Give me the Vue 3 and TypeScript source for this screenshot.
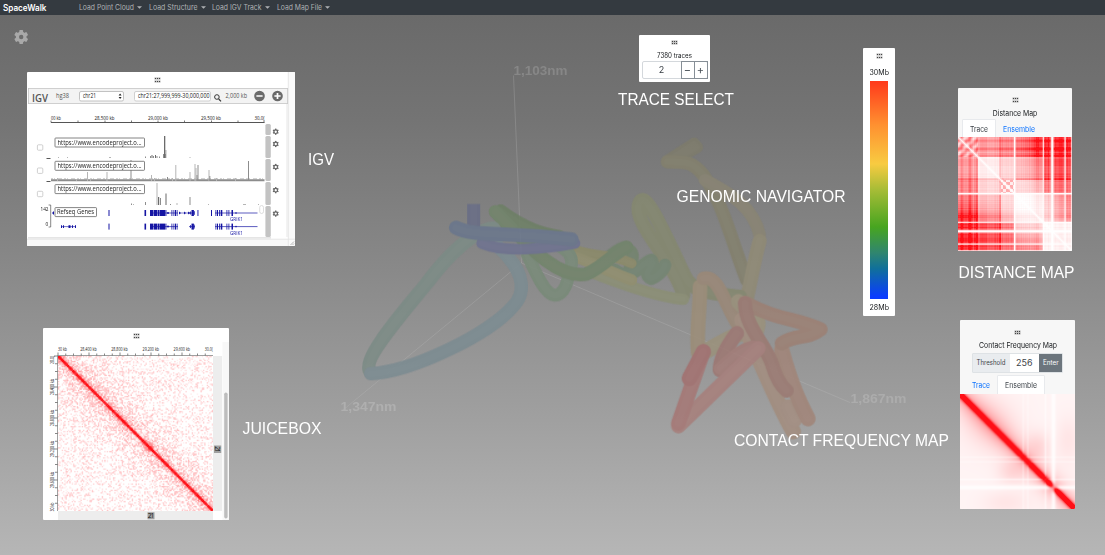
<script setup lang="ts">
import { onMounted, ref } from 'vue'

const menus = [
  { label: 'Load Point Cloud', w: 55, gap: 15 },
  { label: 'Load Structure', w: 48.5, gap: 14.5 },
  { label: 'Load IGV Track', w: 49.5, gap: 15 },
  { label: 'Load Map File', w: 45, gap: 9 },
]

interface Caption { x: number; y: number; w: number; text: string }
const captions: Caption[] = [
  { x: 308, y: 165, w: 26, text: 'IGV' },
  { x: 618, y: 104.7, w: 116, text: 'TRACE SELECT' },
  { x: 676.5, y: 202.3, w: 169, text: 'GENOMIC NAVIGATOR' },
  { x: 242.5, y: 433.7, w: 79, text: 'JUICEBOX' },
  { x: 958.5, y: 277.7, w: 116, text: 'DISTANCE MAP' },
  { x: 734, y: 445.7, w: 215, text: 'CONTACT FREQUENCY MAP' },
]

interface Tube { d: string; c: string; w: number }
const leftTubes: Tube[] = [
  { d: 'M735 600 C790 620 840 610 905 640', c: '#8b8a68', w: 30 },
  { d: 'M740 622 C790 640 850 670 905 690', c: '#918f6e', w: 34 },
  { d: 'M690 590 C730 610 730 640 718 660 C712 720 690 738 672 735 C640 730 610 650 590 610', c: '#788a78', w: 38 },
  { d: 'M512 482 C590 540 640 550 690 560', c: '#6d7f65', w: 38 },
  { d: 'M496 485 C590 580 680 690 770 672 C820 650 850 610 890 592', c: '#71846a', w: 40 },
  { d: 'M490 535 C430 540 350 620 290 700 C230 775 90 930 122 966', c: '#7c8b86', w: 42 },
  { d: 'M122 971 C250 965 480 850 548 770 C590 730 578 670 535 622 C520 600 490 580 470 560', c: '#7b8b91', w: 40 },
  { d: 'M455 580 C520 608 640 598 735 580', c: '#6e7290', w: 32 },
  { d: 'M431 462 L431 545', c: '#686d86', w: 39 },
  { d: 'M378 533 C430 560 520 545 725 568', c: '#69768c', w: 42 },
]
const rightTubes: Tube[] = [
  { d: 'M235 120 L312 70 L322 82 L275 108', c: '#7e7c6c', w: 34 },
  { d: 'M232 125 C300 125 310 130 340 165 C400 250 430 380 470 480', c: '#83806d', w: 40 },
  { d: 'M345 180 C420 220 490 260 509 345', c: '#898473', w: 38 },
  { d: 'M509 362 C490 430 480 500 465 560', c: '#908a75', w: 42 },
  { d: 'M280 525 C255 430 130 310 146 255 C160 200 205 300 285 470 C310 520 370 520 450 530', c: '#85886f', w: 42 },
  { d: 'M0 455 C100 495 200 530 280 538', c: '#8b8f75', w: 34 },
  { d: 'M0 455 C30 440 70 390 102 382 C150 400 115 430 120 450', c: '#73846e', w: 38 },
  { d: 'M75 450 C130 490 150 430 184 420 C200 440 150 460 184 476 C220 460 225 435 225 435', c: '#738571', w: 38 },
  { d: 'M330 500 C330 570 318 640 325 700', c: '#9b8d77', w: 44 },
  { d: 'M340 475 C390 460 410 580 455 630', c: '#9a8877', w: 40 },
  { d: 'M345 695 C400 665 430 640 500 630 C520 580 450 560 445 545', c: '#9a917b', w: 46 },
  { d: 'M455 600 C500 700 560 850 610 935', c: '#a28d7e', w: 46 },
  { d: 'M594 860 L614 900', c: '#a38e81', w: 44 },
  { d: 'M654 896 C620 830 600 780 575 690', c: '#a18578', w: 46 },
  { d: 'M575 670 C620 640 650 660 692 628 C620 595 560 600 465 548', c: '#9c8074', w: 42 },
  { d: 'M465 550 C465 620 530 680 545 730 C560 780 575 800 590 812', c: '#9b7971', w: 42 },
  { d: 'M440 640 C410 680 390 720 390 750', c: '#9d7772', w: 44 },
  { d: 'M390 745 C430 710 450 690 490 680', c: '#a27c77', w: 38 },
  { d: 'M505 685 L300 885 L265 918', c: '#a77f7b', w: 44 },
  { d: 'M265 910 L340 695', c: '#a57775', w: 44 },
  { d: 'M298 775 L340 695', c: '#a2706f', w: 46 },
]

const rulerTicks = [51, 78, 105, 131.5, 158, 184.5, 211.5, 238, 264]
const bars: number[][] = [
  // x, baseline, height, width, tone
  [58, 158, 1, 1, 2], [67, 158, 1, 1, 2], [109, 158, 1, 2, 2], [145, 158, 1.5, 1, 1], [150, 158, 2, 1, 1],
  [151.5, 158, 3, 1, 0], [153, 158, 2, 1, 1], [155, 158, 3, 1, 0], [156.5, 158, 2, 1, 1], [159, 158, 1.5, 1, 1],
  [163, 158, 4, 3, 1], [164, 158, 22, 1.3, 0], [189.5, 158, 1, 1, 2], [165.5, 158, 8, 0.8, 1],
  [57, 181, 3, 1, 2], [76, 181, 2, 1, 2], [87, 181, 9, 1, 2], [90, 181, 2, 1, 2], [106.5, 181, 9, 1, 2],
  [130.5, 181, 21, 1, 1], [151, 181, 6, 1, 2], [154, 181, 3, 1, 2], [167, 181, 4, 1, 1], [175.3, 181, 16, 1, 2],
  [172, 181, 3, 1, 2], [189.5, 181, 9, 1, 2], [194.5, 181, 17, 1, 2], [195.5, 181, 13, 1, 2], [197.5, 181, 16, 1, 1],
  [196.5, 181, 6, 1, 1], [208.5, 181, 11, 1, 2], [209.3, 181, 5, 1, 1], [216, 181, 3, 1, 2], [248, 181, 20, 1, 1],
  [235, 181, 3, 1, 2], [131, 205, 1.5, 1, 1], [133, 205, 1, 1, 2], [145, 205, 3, 1, 1], [156.5, 205, 22, 1, 2],
  [158, 205, 8, 1.2, 0], [160, 205, 7, 1, 1], [165.5, 205, 11.5, 1, 0], [170, 205, 1, 1, 1], [176.5, 205, 2, 1, 2],
  [189.5, 205, 8, 1, 1], [208, 205, 1, 1, 2], [243, 205, 1, 3, 2], [258, 205, 1, 1, 2],
]
const tones = ['#6b6b6b', '#8d8d8d', '#b5b5b5']
const exons: number[][] = [
  [108.5, 1, 6], [144.5, 1.6, 6], [150, 3, 6], [153.5, 4, 6], [158, 1.6, 6], [160, 5, 6], [165.4, 1, 6],
  [171.5, 0.8, 6], [173.5, 0.8, 6], [175, 1, 6], [176.7, 0.8, 6], [191.5, 2.4, 6], [190, 0.8, 3], [194, 0.6, 4],
  [215.5, 0.8, 6], [217, 1, 6], [219, 0.8, 6], [220.7, 1.6, 6], [226.5, 0.8, 6], [228.5, 0.8, 6], [231.5, 1.5, 6],
]
const gearRows = [131.7, 144, 167, 190.2, 213.6]
const slots = [[124, 11], [136, 22], [159, 22], [182, 23], [206, 31]]
const trackNames = [138, 161.3, 184.6]

const juiceLabels = [
  { at: 62.5, w: 9, t: '30 kb' }, { at: 88.5, w: 16.5, t: '28,400 kb' }, { at: 119.5, w: 16.5, t: '28,800 kb' },
  { at: 150.8, w: 16.5, t: '29,200 kb' }, { at: 181.8, w: 16.5, t: '29,600 kb' }, { at: 208.7, w: 8, t: '30,0(' },
]
const juiceLeft = [
  { at: 360, w: 8, t: '28,0(' }, { at: 387, w: 16.5, t: '28,400 kb' }, { at: 418, w: 16.5, t: '28,800 kb' },
  { at: 449, w: 16.5, t: '29,200 kb' }, { at: 480, w: 16.5, t: '29,600 kb' }, { at: 507, w: 9, t: '30 kb' },
]
const juiceTicks = Array.from({ length: 20 }, (_, i) => i * 7.75)

const spokes = [0, 60, 120, 180, 240, 300]

function makeRandom(seed: number) {
  let s = seed
  return () => {
    s = (s * 1664525 + 1013904223) >>> 0
    return s / 4294967296
  }
}

type Shade = (x: number, y: number) => number
function paint(cv: HTMLCanvasElement | null, n: number, shade: Shade) {
  const ctx = cv?.getContext('2d')
  if (!ctx) return
  const img = ctx.createImageData(n, n)
  for (let y = 0; y < n; y++) {
    for (let x = 0; x < n; x++) {
      const v = Math.max(0, Math.min(1, shade(x, y)))
      const k = (y * n + x) * 4
      img.data[k] = 255
      img.data[k + 1] = 255 - v * 240
      img.data[k + 2] = 255 - v * 233
      img.data[k + 3] = 255
    }
  }
  ctx.putImageData(img, 0, 0)
}

const juice = ref<HTMLCanvasElement | null>(null)
const dist = ref<HTMLCanvasElement | null>(null)
const contact = ref<HTMLCanvasElement | null>(null)
const bump = (t: number, c: number, w: number) => Math.exp(-(((t - c) / w) ** 2))

const edges = [0.17, 0.37, 0.49, 0.745, 0.82, 1.01]
const blocks = [
  [0.34, 0.4, 0.48, 0.62, 0.92, 0.88],
  [0.4, 0.08, 0.18, 0.32, 0.76, 0.74],
  [0.48, 0.18, 0.1, 0.18, 0.58, 0.6],
  [0.62, 0.32, 0.18, 0.02, 0.14, 0.18],
  [0.92, 0.76, 0.58, 0.14, 0.03, 0.06],
  [0.88, 0.74, 0.6, 0.18, 0.06, 0.06],
]
const domain = (t: number) => edges.findIndex((e) => t < e)

onMounted(() => {
  const r1 = makeRandom(21)
  const n = 124
  const grid = new Float32Array(n * n)
  for (let y = 0; y < n; y++) {
    for (let x = 0; x <= y; x++) {
      const d = y - x
      const m = (x + y) / 2
      const dens = 0.28 + 0.5 * Math.exp(-d / 15) + 0.15 * bump(m, 25, 16) * Math.exp(-d / 40)
      let v = r1() < dens ? 0.05 + r1() * 0.2 + 0.25 * r1() * Math.exp(-d / 18) : 0
      v += Math.exp(-d / 1.8) * (0.25 + 0.5 * r1())
      if (d < 2) v = 0.85 + r1() * 0.35
      v += 0.9 * bump(m, 73, 1.8) * Math.exp(-d / 2)
      grid[y * n + x] = v
      grid[x * n + y] = v
    }
  }
  paint(juice.value, n, (x, y) => grid[y * n + x])

  const size = 114
  const r2 = makeRandom(8)
  const jitter = Array.from({ length: size }, () => r2() - 0.5)
  const stripe = (t: number, i: number) =>
    0.22 * jitter[i] + 0.5 * bump(t, 0.1, 0.012) + 0.2 * bump(t, 0.03, 0.015) + 0.25 * bump(t, 0.16, 0.008) +
    0.15 * bump(t, 0.365, 0.007) + 0.3 * bump(t, 0.69, 0.03) - 0.15 * bump(t, 0.055, 0.012) - 0.15 * bump(t, 0.13, 0.01)
  const gap = (t: number) =>
    1 - Math.min(1, bump(t, 0.493, 0.009) + bump(t, 0.822, 0.015) + 0.8 * bump(t, 0.745, 0.007) +
      0.85 * bump(t, 0.935, 0.008) + 0.95 * bump(t, 0.996, 0.009))
  paint(dist.value, size, (x, y) => {
    const a = x / size
    const b = y / size
    const d = Math.abs(a - b)
    const hi = Math.max(a, b)
    const p = domain(a)
    const q = domain(b)
    let v = blocks[p][q]
    if (p === 3 || q === 3) v += (hi - 0.6) * 1.1 * Math.min(1, d * 2)
    v += (stripe(a, x) + stripe(b, y)) * (0.12 + v * 0.7)
    if (p === 2 && q === 2) v = Math.sin(a * 105) * Math.sin(b * 105) < 0 ? 0.35 : 0.08
    if (p === 0 && q === 0) v += 0.15 * Math.sin((a + b) * 75)
    v += 0.25 * (bump(a, 0.365, 0.007) + bump(b, 0.365, 0.007)) * (hi < 0.4 || hi > 0.5 ? 1 : 0.6)
    v *= Math.min(1, 0.15 + d * 34)
    return v * gap(a) * gap(b)
  })

  const notch = (t: number) =>
    1 - 0.85 * bump(t, 0.815, 0.02) - 0.4 * bump(t, 0.55, 0.007) - 0.4 * bump(t, 0.59, 0.007) - 0.55 * bump(t, 0.745, 0.008)
  paint(contact.value, size, (x, y) => {
    const a = x / (size - 1)
    const b = y / (size - 1)
    const d = Math.abs(a - b)
    const m = (a + b) / 2
    const core = Math.exp(-((d / 0.034) ** 2)) * 1.05 * Math.sqrt(Math.min(1, notch(m) + 0.1))
    const halo = 0.55 * Math.exp(-d / (0.08 + 0.05 * bump(m, 0.25, 0.2))) + 0.045
    const patch = 0.1 * bump(Math.max(a, b), 0.68, 0.1) * bump(Math.min(a, b), 0.45, 0.12) +
      0.06 * bump(Math.max(a, b), 0.95, 0.1) * bump(Math.min(a, b), 0.4, 0.2)
    return core + (halo + patch) * Math.max(0, notch(a)) * Math.max(0, notch(b))
  })
})
</script>

<template>
  <main class="app">
    <nav class="nav">
      <svg class="brand" width="50" height="15">
        <text x="3" y="10.6" textLength="43.5" lengthAdjust="spacingAndGlyphs">SpaceWalk</text>
      </svg>
      <div class="menus">
        <div v-for="m in menus" :key="m.label" class="menu" :style="{ width: m.w + m.gap + 'px' }">
          <svg :width="m.w + 3" height="15"><text x="1" y="10.4" :textLength="m.w" lengthAdjust="spacingAndGlyphs">{{ m.label }}</text></svg>
          <svg class="caret" width="5" height="3"><path d="M0 .2h5L2.5 2.8z" /></svg>
        </div>
      </div>
    </nav>

    <svg class="scene" width="1105" height="555" viewBox="0 0 1105 555">
      <g fill="none" stroke="#c4c4c4" stroke-opacity=".3" stroke-width=".8">
        <path d="M513.5 75.5L521.5 263L343 410" />
        <path d="M521.5 263L850 402.5" />
      </g>
      <g fill="none" stroke-linejoin="round" stroke-linecap="round" opacity=".88">
        <g transform="translate(590 120) scale(.33333)">
          <g v-for="(t, i) in rightTubes" :key="i">
            <path :d="t.d" :stroke="t.c" :stroke-width="t.w" />
            <path :d="t.d" stroke="#fff" stroke-opacity=".015" :stroke-width="t.w * 0.55" />
          </g>
        </g>
        <g transform="translate(330 50) scale(.33333)">
          <g v-for="(t, i) in leftTubes" :key="i" :stroke-linecap="i === 8 ? 'butt' : 'round'">
            <path :d="t.d" :stroke="t.c" :stroke-width="t.w" />
            <path :d="t.d" stroke="#fff" stroke-opacity=".015" :stroke-width="t.w * 0.55" />
          </g>
        </g>
      </g>
      <g class="axis">
        <text x="513.5" y="75.3" textLength="54" lengthAdjust="spacingAndGlyphs" fill="#878787">1,103nm</text>
        <text x="340.5" y="411" textLength="56" lengthAdjust="spacingAndGlyphs" fill="#afafaf">1,347nm</text>
        <text x="850.5" y="403" textLength="56" lengthAdjust="spacingAndGlyphs" fill="#acacac">1,867nm</text>
      </g>
      <g class="captions">
        <text v-for="c in captions" :key="c.text" :x="c.x" :y="c.y" :textLength="c.w" lengthAdjust="spacingAndGlyphs">{{ c.text }}</text>
      </g>
      <g transform="translate(21.2 37)" fill="#a9a9a9">
        <rect v-for="a in spokes" :key="a" x="-1.9" y="-7" width="3.8" height="4" rx=".8" :transform="`rotate(${a})`" />
        <circle r="3.8" fill="none" stroke="#a9a9a9" stroke-width="3.2" />
      </g>
    </svg>

    <section class="panel igv">
      <div class="handle h-igv"><i v-for="k in 6" :key="k" /></div>
      <div class="toolbar">
        <svg width="260" height="16" viewBox="28 88 260 16">
          <text class="logo" x="32" y="101.5" textLength="16" lengthAdjust="spacingAndGlyphs">IGV</text>
          <text class="os" x="56" y="98.3" textLength="13" lengthAdjust="spacingAndGlyphs">hg38</text>
          <rect x="79.5" y="91.5" width="44" height="9.5" rx="1.5" fill="#fff" stroke="#c2c2c2" />
          <text class="os dark" x="83" y="98.3" textLength="13" lengthAdjust="spacingAndGlyphs">chr21</text>
          <path d="M118.6 95.5l1.5-2 1.5 2zM118.6 97l1.5 2 1.5-2z" fill="#222" />
          <rect x="134.5" y="91.5" width="76" height="9.5" rx="1.5" fill="#fff" stroke="#d0d0d0" />
          <text class="os dark" x="138" y="98.3" textLength="71.5" lengthAdjust="spacingAndGlyphs">chr21:27,999,999-30,000,000</text>
          <circle cx="216.9" cy="97" r="2.3" fill="none" stroke="#333" stroke-width="1" />
          <path d="M218.7 99l2.3 2.4" stroke="#333" stroke-width="1.2" />
          <text class="os" x="225.5" y="98.3" textLength="21.5" lengthAdjust="spacingAndGlyphs">2,000 kb</text>
          <circle cx="259.5" cy="96" r="5.3" fill="#6a6a6a" /><path d="M256.4 96h6.2" stroke="#fff" stroke-width="1.7" />
          <circle cx="277.5" cy="96" r="5.3" fill="#6a6a6a" /><path d="M274.4 96h6.2M277.5 92.9v6.2" stroke="#fff" stroke-width="1.7" />
        </svg>
      </div>
      <svg class="tracks" width="268" height="142" viewBox="27 104 268 142">
        <g class="tiny">
          <text x="51" y="119.5" textLength="10" lengthAdjust="spacingAndGlyphs">00 kb</text>
          <text x="94.5" y="119.5" textLength="20" lengthAdjust="spacingAndGlyphs">28,500 kb</text>
          <text x="148" y="119.5" textLength="20" lengthAdjust="spacingAndGlyphs">29,000 kb</text>
          <text x="201" y="119.5" textLength="20" lengthAdjust="spacingAndGlyphs">29,500 kb</text>
          <text x="254.5" y="119.5" textLength="10" lengthAdjust="spacingAndGlyphs">30,0(</text>
        </g>
        <path d="M51 122.5H264.5" stroke="#555" />
        <path v-for="t in rulerTicks" :key="t" :d="`M${t} 120.5v2`" stroke="#555" stroke-width=".8" />
        <rect v-for="s in slots" :key="s[0]" x="265.4" :y="s[0]" width="5.4" :height="s[1]" rx="1.5" fill="#c3c3c3" />
        <g v-for="y in gearRows" :key="y" :transform="`translate(275.7 ${y})`" fill="#686868">
          <rect v-for="a in spokes" :key="a" x="-.7" y="-3.1" width="1.4" height="1.6" :transform="`rotate(${a})`" />
          <circle r="1.8" fill="none" stroke="#686868" stroke-width="1.2" />
        </g>
        <rect v-for="y in [144.8, 168, 191.3]" :key="y" x="37.4" :y="y" width="5.4" height="5.4" rx="1" fill="#fff" stroke="#bbb" stroke-width=".7" />
        <path d="M46.5 158.5h4M46.5 181.5h4" stroke="#444" stroke-width=".9" />
        <path d="M51 180.2H264.5" stroke="#8c8c8c" stroke-width="2" />
        <path d="M51 178.9H264.5" stroke="#999" stroke-width=".7" stroke-dasharray="2 1 1 3 4 2" />
        <rect v-for="(b, i) in bars" :key="i" :x="b[0]" :y="b[1] - b[2]" :width="b[3]" :height="b[2]" :fill="tones[b[4]]" />
        <path d="M48.6 205h2.1v22h-2.1" fill="none" stroke="#555" stroke-width=".7" />
        <g class="tiny"><text x="40.5" y="210.6" textLength="8" lengthAdjust="spacingAndGlyphs">142</text><text x="45.5" y="226">0</text></g>
        <g fill="#1515a3" stroke="none">
          <template v-for="row in [213, 226.6]" :key="row">
            <rect v-for="e in exons" :key="e[0]" :x="e[0]" :y="row - e[2] / 2" :width="e[1]" :height="e[2]" />
            <path :d="`M150 ${row}H178M189 ${row}H195M215 ${row}H257.5`" stroke="#1515a3" stroke-width=".7" />
            <circle cx="168" :cy="row" r="1" /><circle cx="236" :cy="row" r=".8" />
          </template>
          <path d="M179 213h11" stroke="#1515a3" stroke-width=".55" />
          <rect x="197.5" y="210" width=".9" height="6" /><rect x="211" y="210" width="1" height="6" />
          <path d="M179 211.5l2 1.5-2 1.5M184 211.5l2 1.5-2 1.5M188 211.5l2 1.5-2 1.5" stroke="none" />
          <path d="M61 226.6H76" stroke="#1515a3" stroke-width=".6" />
          <path d="M61 225.2h1v2.8h-1zM63 225.2h1v2.8h-1zM68.5 225.2h2v2.8h-2zM72 225.2h1v2.8h-1zM75 225.2h1v2.8h-1z" />
          <path d="M52 213l2-2v4z" />
          <text class="gene" x="230" y="221.3" textLength="13" lengthAdjust="spacingAndGlyphs">GRIK1</text>
          <text class="gene" x="230" y="234.9" textLength="13" lengthAdjust="spacingAndGlyphs">GRIK1</text>
        </g>
        <g fill="#fff" stroke="#666" stroke-width=".8">
          <rect v-for="y in trackNames" :key="y" x="55" :y="y" width="89.5" height="9" rx=".7" />
          <rect x="55" y="207.6" width="41.5" height="9" rx=".7" />
        </g>
        <text v-for="y in trackNames" :key="y" class="os dark" x="57.5" :y="y + 6.6" textLength="84" lengthAdjust="spacingAndGlyphs">https://www.encodeproject.o...</text>
        <text class="os dark" x="57" y="214.3" textLength="37" lengthAdjust="spacingAndGlyphs">Refseq Genes</text>
        <rect x="259.7" y="205.5" width="3.8" height="8" rx="1.9" fill="#fff" stroke="#c8c8c8" stroke-width=".6" />
        <path d="M28 237.9H271" stroke="#c9c9c9" stroke-width=".8" />
        <rect x="288" y="72" width="7" height="174" fill="#fafafa" />
        <rect x="27" y="239" width="261" height="7" fill="#f8f8f8" />
        <path d="M288.3 72V246M27 239.2H295" stroke="#e2e2e2" stroke-width=".8" />
        <path d="M287 104V237" stroke="#ddd" stroke-width=".7" />
        <path d="M290.5 245l3.5-3.5M292.5 245l1.5-1.5" stroke="#888" stroke-width=".6" />
      </svg>
    </section>

    <section class="panel juice">
      <div class="handle"><i v-for="k in 6" :key="k" /></div>
      <svg class="fill" width="186" height="192" viewBox="43 328 186 192">
        <path d="M213 356h9v155h-9zM58 511h155v9h-155z" fill="#ededed" />
        <rect x="222.5" y="342" width="6.5" height="178" fill="#f8f8f8" />
        <rect x="224.2" y="392.5" width="3.4" height="126" rx="1.7" fill="#bdbdbd" />
        <path d="M57.5 511V355.5H213" fill="none" stroke="#777" stroke-width=".7" />
        <g stroke="#555" stroke-width=".7">
          <path v-for="(t, i) in juiceTicks" :key="t" :d="`M${58 + t} ${i % 4 ? 353.5 : 352.5}V355.5M${i % 4 ? 55 : 54} ${356 + t}H57.5`" />
        </g>
        <g class="ax">
          <text v-for="l in juiceLabels" :key="l.at" :x="l.at - l.w / 2" y="351.3" :textLength="l.w" lengthAdjust="spacingAndGlyphs">{{ l.t }}</text>
          <text v-for="l in juiceLeft" :key="l.at" :transform="`translate(53.5 ${l.at + l.w / 2}) rotate(-90)`" :textLength="l.w" lengthAdjust="spacingAndGlyphs">{{ l.t }}</text>
        </g>
        <path d="M214 445.5h7.2v7.5H214zM147.5 512.2h7v7h-7z" fill="#a0a0a0" />
        <g class="chr">
          <text x="147.8" y="518.3" textLength="6.4">21</text>
          <text transform="translate(215.2 446.2) rotate(90)" textLength="6.4">21</text>
        </g>
      </svg>
      <canvas ref="juice" class="map" width="124" height="124" />
    </section>

    <section class="panel trace">
      <div class="handle"><i v-for="k in 6" :key="k" /></div>
      <svg class="line" width="71" height="12"><text x="18" y="9.4" textLength="35" lengthAdjust="spacingAndGlyphs" class="ui s7">7380 traces</text></svg>
      <div class="stepper"><span class="num">2</span><span class="btn">−</span><span class="btn">+</span></div>
    </section>

    <section class="panel genome">
      <div class="handle"><i v-for="k in 6" :key="k" /></div>
      <svg width="32" height="17"><text x="6.5" y="11" textLength="19.5" lengthAdjust="spacingAndGlyphs" class="ui s7">30Mb</text></svg>
      <div class="ramp" />
      <svg width="32" height="17"><text x="6.5" y="12" textLength="19.5" lengthAdjust="spacingAndGlyphs" class="ui s7">28Mb</text></svg>
    </section>

    <section class="panel distance">
      <div class="handle"><i v-for="k in 6" :key="k" /></div>
      <svg class="head" width="114" height="15"><text x="34.8" y="10.5" textLength="44.5" lengthAdjust="spacingAndGlyphs" class="ui s75">Distance Map</text></svg>
      <div class="tabs">
        <svg class="tab on" width="32" height="19"><text x="7" y="11.5" textLength="18" lengthAdjust="spacingAndGlyphs" class="ui s75 grey">Trace</text></svg>
        <svg class="tab" width="48" height="19"><text x="8" y="11.5" textLength="32" lengthAdjust="spacingAndGlyphs" class="ui s75 link">Ensemble</text></svg>
      </div>
      <canvas ref="dist" width="114" height="114" />
    </section>

    <section class="panel contact">
      <div class="handle"><i v-for="k in 6" :key="k" /></div>
      <svg class="head" width="114" height="15"><text x="18" y="10" textLength="78" lengthAdjust="spacingAndGlyphs" class="ui s75">Contact Frequency Map</text></svg>
      <div class="threshold">
        <svg class="lab" width="37" height="17"><text x="3.5" y="11.2" textLength="29" lengthAdjust="spacingAndGlyphs" class="ui s7 grey">Threshold</text></svg>
        <svg class="val" width="29" height="17"><text x="6" y="12" textLength="16.5" lengthAdjust="spacingAndGlyphs" class="ui s9 grey">256</text></svg>
        <svg class="go" width="23" height="17"><text x="4" y="11.2" textLength="15.5" lengthAdjust="spacingAndGlyphs" class="ui s7">Enter</text></svg>
      </div>
      <div class="tabs two">
        <svg class="tab" width="32" height="19"><text x="6" y="11.5" textLength="18" lengthAdjust="spacingAndGlyphs" class="ui s75 link">Trace</text></svg>
        <svg class="tab on" width="46" height="19"><text x="7" y="11.5" textLength="32" lengthAdjust="spacingAndGlyphs" class="ui s75 grey">Ensemble</text></svg>
      </div>
      <canvas ref="contact" width="114" height="114" />
    </section>
  </main>
</template>

<style>
html, body { margin: 0; overflow: hidden; }
</style>

<style scoped>
.app {
  position: relative;
  width: 1105px;
  height: 555px;
  overflow: hidden;
  font-family: Inter, Roboto, sans-serif;
  background: linear-gradient(#6a6a6a 15px, #747474 120px, #868686 250px, #a0a0a0 420px, #b6b6b6 555px);
}
svg, canvas { display: block; }
svg { overflow: visible; }
.nav {
  display: flex;
  height: 15px;
  background: #343a40;
}
.brand { fill: #fff; font-size: 8.8px; font-weight: 600; }
.menus { display: flex; margin-left: 28px; fill: #aeb1b3; font-size: 7.4px; }
.menu { display: flex; flex: none; align-items: center; }
.caret { margin-left: 1px; }
.scene { position: absolute; left: 0; top: 0; }
.axis { font: bold 13px "Liberation Sans", Arial, sans-serif; }
.captions { font: 17px "Liberation Sans", Arial, sans-serif; fill: #fff; }

.panel {
  position: absolute;
  display: flex;
  flex-direction: column;
  align-items: center;
  background: #fff;
  border-radius: 1px;
  overflow: hidden;
}
.handle {
  display: grid;
  grid-template-columns: repeat(3, 1px);
  gap: 1px;
  flex: none;
  margin-top: 6px;
  height: 4px;
}
.handle i { width: 1px; height: 1px; background: #444; box-shadow: 0 0 0 .5px #aaa; }
.igv { left: 27px; top: 72px; width: 268px; height: 174px; }
.h-igv { margin-left: -7px; }
.toolbar {
  box-sizing: border-box;
  width: 260px;
  height: 16px;
  margin: 6px 0 0 -6px;
  background: #f3f3f3;
  box-shadow: inset 0 0 0 .8px #c4c4c4;
}
.tracks { flex: none; }
.logo { font: 10px "Open Sans", sans-serif; fill: #555; font-weight: 600; }
.os { font: 6.4px "Open Sans", sans-serif; fill: #555; }
.dark { fill: #222; }
.tiny { font: 4.8px "Open Sans", sans-serif; fill: #111; }
.gene { font: 5px "Open Sans", sans-serif; }

.juice { left: 43px; top: 328px; width: 186px; height: 192px; }
.fill { position: absolute; left: 0; top: 0; }
.juice .map { position: relative; flex: none; width: 155px; height: 155px; margin: 18px 0 0 -1px; }
.ax { font: 5px "Open Sans", sans-serif; fill: #222; }
.chr { font: 6.6px "Open Sans", sans-serif; fill: #111; }

.trace { left: 639px; top: 34.5px; width: 71px; height: 47px; }
.line { margin-top: 4px; flex: none; }
.stepper {
  display: flex;
  box-sizing: border-box;
  width: 66px;
  height: 18px;
  border: .8px solid #d4d8dc;
  border-radius: 2px;
  color: #495057;
  font-size: 9px;
  line-height: 16px;
  text-align: center;
}
.num { width: 38px; color: #343a40; }
.btn { flex: 1; border: 1px solid #868e96; margin: -1px -1px -1px 0; color: #495057; font-size: 11px; }

.genome { left: 863px; top: 48px; width: 32px; height: 268px; }
.genome svg { margin-top: 6px; flex: none; }
.ramp {
  flex: none;
  width: 18px;
  height: 218px;
  background: linear-gradient(#ff391b, #ff9030 20%, #f8cb41 38%, #a6bc36 50%, #47a520 67%, #2f8570 79%, #10709a 86%, #0a3cff 99%);
}
.genome .ramp + svg { margin-top: -1px; }

.distance { left: 958px; top: 87.5px; width: 114px; height: 163.5px; background: #f7f7f7; }
.distance .handle, .contact .handle { margin-top: 10.5px; }
.head { margin-top: 3px; flex: none; }
.tabs { display: flex; flex: none; align-self: flex-start; height: 18px; margin-left: 4.5px; }
.distance canvas { margin-top: -1px; }
.tab.on { background: #fff; box-shadow: 0 0 0 .6px #dee2e6; }
.contact { left: 960px; top: 320px; width: 115px; height: 188.5px; background: #f7f7f7; }
.contact canvas { flex: none; width: 115px; height: 115px; }
.threshold {
  display: flex;
  flex: none;
  margin-top: 1.5px;
  height: 17.5px;
  box-shadow: 0 0 0 .6px #ced4da;
}
.lab { background: #e9ecef; height: 17.5px; }
.val { background: #fff; height: 17.5px; }
.go { background: #6c757d; height: 17.5px; }
.two { margin: 4.5px 0 0 6px; }
.ui { font-family: Inter, Roboto, sans-serif; fill: #16191c; }
.s7 { font-size: 7px; }
.s75 { font-size: 7.5px; }
.s9 { font-size: 9.4px; }
.grey { fill: #3c4248; }
.link { fill: #0a72ff; }
.go .ui { fill: #fff; }
</style>
